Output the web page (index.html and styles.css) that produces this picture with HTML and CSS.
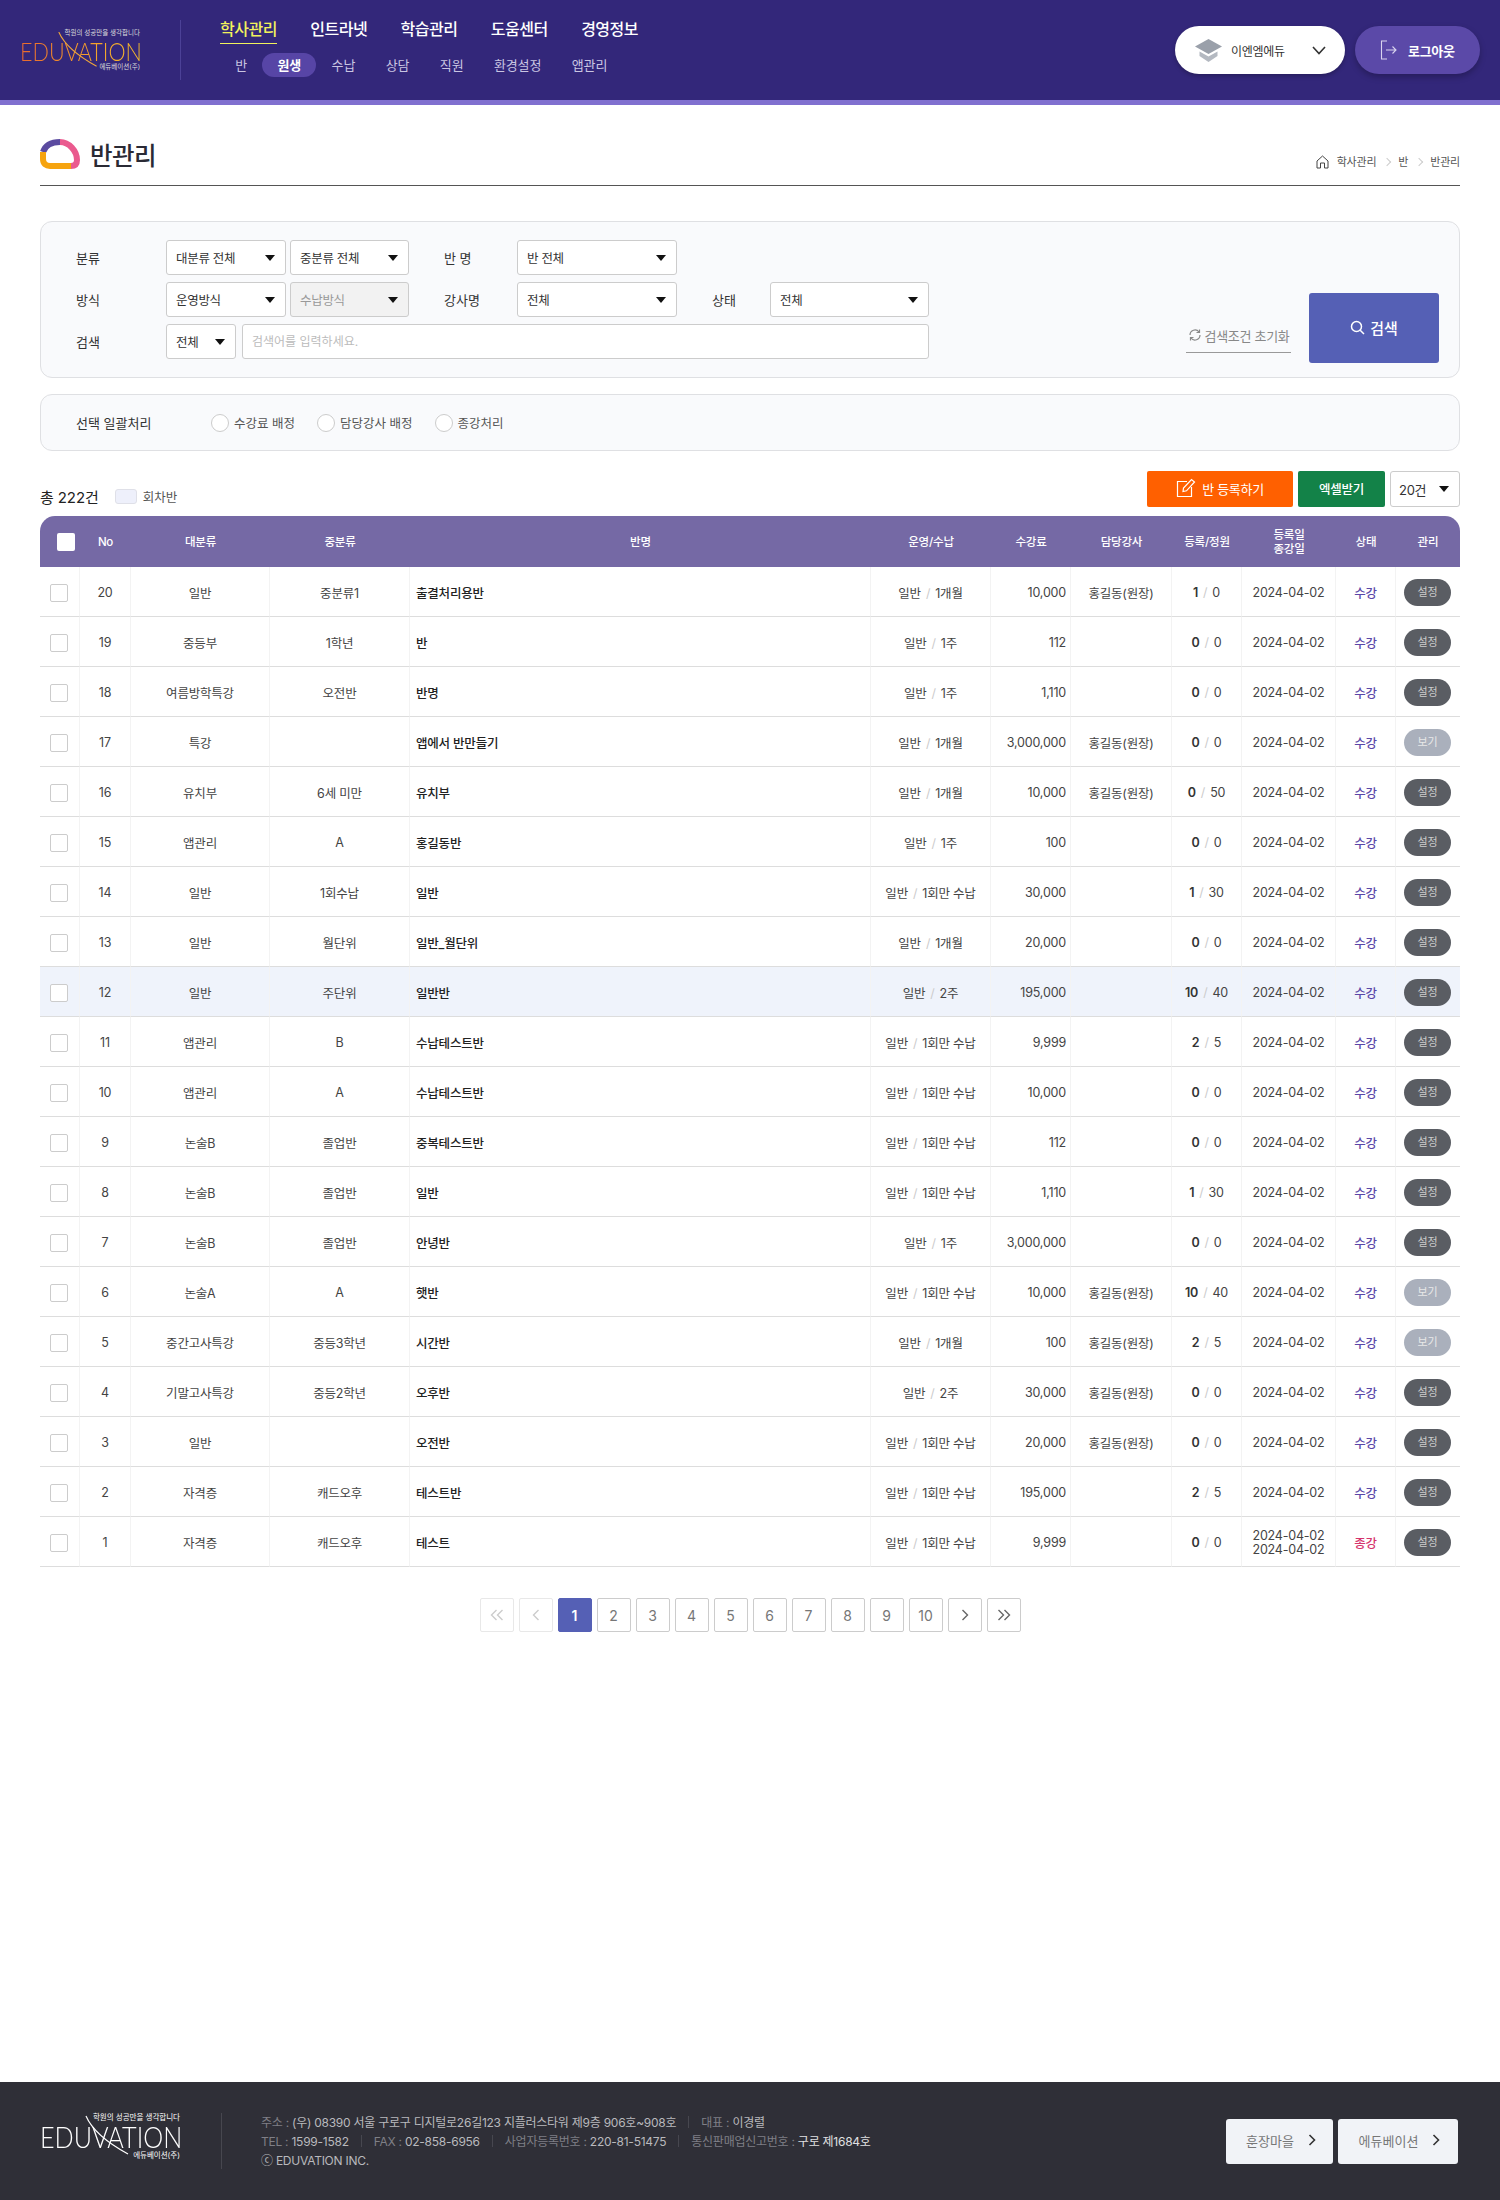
FILE: index.html
```html
<!DOCTYPE html>
<html lang="ko">
<head>
<meta charset="UTF-8">
<meta name="viewport" content="width=device-width, initial-scale=1.0">
<title>반관리</title>
<link rel="stylesheet" href="styles.css">
</head>
<body>
<header class="top">
  <a class="logo">
    <span class="logo-tag">학원의 성공만을 생각합니다</span>
    <span class="logo-name">EDUVATION</span>
    <span class="logo-sub">에듀베이션(주)</span>
    <svg class="logo-slash" viewBox="0 0 50 40"><path d="M2 0 C8 14 22 26 44 38" fill="none" stroke="#f0a63a" stroke-width="1.2"/></svg>
  </a>
  <nav class="nav">
    <div class="nav-main">
      <a class="on">학사관리</a>
      <a>인트라넷</a>
      <a>학습관리</a>
      <a>도움센터</a>
      <a>경영정보</a>
    </div>
    <div class="nav-sub">
      <a>반</a>
      <a class="on">원생</a>
      <a>수납</a>
      <a>상담</a>
      <a>직원</a>
      <a>환경설정</a>
      <a>앱관리</a>
    </div>
  </nav>
  <div class="top-right">
    <div class="academy">
      <svg width="27" height="23" viewBox="0 0 27 23"><path d="M13.5 0 L27 7.5 L13.5 15 L0 7.5 Z" fill="#9aa0aa"/><path d="M4.5 12.5 L13.5 17.5 L22.5 12.5 V17 L13.5 23 L4.5 17 Z" fill="#b4b9c1"/></svg>
      <span class="academy-name">이엔엠에듀</span>
      <svg width="14" height="9" viewBox="0 0 14 9"><path d="M1 1 L7 7.5 L13 1" fill="none" stroke="#333" stroke-width="1.6"/></svg>
    </div>
    <a class="logout">
      <svg width="17" height="20" viewBox="0 0 17 20" fill="none" stroke="#d9d4ee" stroke-width="1.1"><path d="M7 1 H1.5 V19 H7"/><path d="M6 10 H16 M12.5 6.5 L16 10 L12.5 13.5"/></svg>
      로그아웃
    </a>
  </div>
</header>

<main class="main">
  <div class="page-head">
    <h1 class="page-title">
      <svg width="40" height="30" viewBox="0 0 40 30" fill="none" stroke-width="6" stroke-linecap="butt">
        <path d="M3 13 C5 7 10 3 20 3" stroke="#5b4ba0"/>
        <path d="M20 3 C29 3 37 12 37 21 C37 25 35 27 31 27" stroke="#ea5a8e"/>
        <path d="M3 13 V20 C3 25 6 27 10 27 H31" stroke="#f6a40f"/>
      </svg>
      반관리
    </h1>
    <div class="crumb">
      <svg width="13" height="14" viewBox="0 0 13 14" fill="none" stroke="#444" stroke-width="1"><path d="M1 13 V6 L6.5 1 L12 6 V13 H8.5 V8 H4.5 V13 Z"/></svg>
      <span>학사관리</span>
      <i class="crumb-arrow"></i>
      <span>반</span>
      <i class="crumb-arrow"></i>
      <span>반관리</span>
    </div>
  </div>

  <section class="panel search">
    <div class="fields">
      <div class="field-row">
        <label class="lb">분류</label>
        <span class="sel w120">대분류 전체</span>
        <span class="sel w119 ml4">중분류 전체</span>
        <label class="lb lb-name">반 명</label>
        <span class="sel w160">반 전체</span>
      </div>
      <div class="field-row">
        <label class="lb">방식</label>
        <span class="sel w120">운영방식</span>
        <span class="sel w119 ml4 off">수납방식</span>
        <label class="lb lb-name">강사명</label>
        <span class="sel w160">전체</span>
        <label class="lb lb-state">상태</label>
        <span class="sel w159">전체</span>
      </div>
      <div class="field-row">
        <label class="lb">검색</label>
        <span class="sel w70">전체</span>
        <input class="keyword" type="text" placeholder="검색어를 입력하세요.">
      </div>
    </div>
    <div class="search-actions">
      <a class="reset">
        <svg width="14" height="14" viewBox="0 0 14 14" fill="none" stroke="#888" stroke-width="1.2"><path d="M2 7 A5 5 0 0 1 11 4 M12 7 A5 5 0 0 1 3 10"/><path d="M11.5 1.5 V4.5 H8.5 M2.5 12.5 V9.5 H5.5"/></svg>
        검색조건 초기화
      </a>
      <button class="search-btn" type="button">
        <svg width="15" height="15" viewBox="0 0 15 15" fill="none" stroke="#fff" stroke-width="1.5"><circle cx="6.5" cy="6.5" r="5"/><path d="M10.2 10.2 L14 14"/></svg>
        검색
      </button>
    </div>
  </section>

  <section class="panel batch">
    <label class="batch-title">선택 일괄처리</label>
    <div class="radios">
      <label><i class="radio"></i>수강료 배정</label>
      <label><i class="radio"></i>담당강사 배정</label>
      <label><i class="radio"></i>종강처리</label>
    </div>
  </section>

  <div class="toolbar">
    <div class="total">
      <span class="total-num">총 222건</span>
      <i class="swatch"></i>
      <span class="swatch-label">회차반</span>
    </div>
    <div class="tools">
      <a class="btn btn-orange">
        <svg width="20" height="20" viewBox="0 0 20 20" fill="none" stroke="#fff" stroke-width="1.2"><path d="M11 3.5 H1.5 V18.5 H15.5 V9"/><path d="M7 13.5 L7.5 10 L15.5 1.5 L18.5 4 L10.5 12.8 Z"/></svg>
        반 등록하기
      </a>
      <a class="btn btn-green">엑셀받기</a>
      <span class="sel w70 size">20건</span>
    </div>
  </div>

  <table class="list">
    <colgroup>
      <col class="c-check"><col class="c-no"><col class="c-big"><col class="c-mid"><col>
      <col class="c-type"><col class="c-fee"><col class="c-teacher"><col class="c-count">
      <col class="c-date"><col class="c-state"><col class="c-manage">
    </colgroup>
    <thead>
      <tr>
        <th><i class="check check-all"></i></th><th>No</th><th>대분류</th><th>중분류</th><th>반명</th>
        <th>운영/수납</th><th>수강료</th><th>담당강사</th><th>등록/정원</th><th>등록일<br>종강일</th><th>상태</th><th>관리</th>
      </tr>
    </thead>
    <tbody>
      <tr><td><i class="check"></i></td><td>20</td><td>일반</td><td>중분류1</td><td class="name">출결처리용반</td><td>일반<em>/</em>1개월</td><td class="fee">10,000</td><td>홍길동(원장)</td><td><b>1</b><em>/</em>0</td><td>2024-04-02</td><td class="ing">수강</td><td><a class="mg">설정</a></td></tr>
      <tr><td><i class="check"></i></td><td>19</td><td>중등부</td><td>1학년</td><td class="name">반</td><td>일반<em>/</em>1주</td><td class="fee">112</td><td></td><td><b>0</b><em>/</em>0</td><td>2024-04-02</td><td class="ing">수강</td><td><a class="mg">설정</a></td></tr>
      <tr><td><i class="check"></i></td><td>18</td><td>여름방학특강</td><td>오전반</td><td class="name">반명</td><td>일반<em>/</em>1주</td><td class="fee">1,110</td><td></td><td><b>0</b><em>/</em>0</td><td>2024-04-02</td><td class="ing">수강</td><td><a class="mg">설정</a></td></tr>
      <tr><td><i class="check"></i></td><td>17</td><td>특강</td><td></td><td class="name">앱에서 반만들기</td><td>일반<em>/</em>1개월</td><td class="fee">3,000,000</td><td>홍길동(원장)</td><td><b>0</b><em>/</em>0</td><td>2024-04-02</td><td class="ing">수강</td><td><a class="mg mg-view">보기</a></td></tr>
      <tr><td><i class="check"></i></td><td>16</td><td>유치부</td><td>6세 미만</td><td class="name">유치부</td><td>일반<em>/</em>1개월</td><td class="fee">10,000</td><td>홍길동(원장)</td><td><b>0</b><em>/</em>50</td><td>2024-04-02</td><td class="ing">수강</td><td><a class="mg">설정</a></td></tr>
      <tr><td><i class="check"></i></td><td>15</td><td>앱관리</td><td>A</td><td class="name">홍길동반</td><td>일반<em>/</em>1주</td><td class="fee">100</td><td></td><td><b>0</b><em>/</em>0</td><td>2024-04-02</td><td class="ing">수강</td><td><a class="mg">설정</a></td></tr>
      <tr><td><i class="check"></i></td><td>14</td><td>일반</td><td>1회수납</td><td class="name">일반</td><td>일반<em>/</em>1회만 수납</td><td class="fee">30,000</td><td></td><td><b>1</b><em>/</em>30</td><td>2024-04-02</td><td class="ing">수강</td><td><a class="mg">설정</a></td></tr>
      <tr><td><i class="check"></i></td><td>13</td><td>일반</td><td>월단위</td><td class="name">일반_월단위</td><td>일반<em>/</em>1개월</td><td class="fee">20,000</td><td></td><td><b>0</b><em>/</em>0</td><td>2024-04-02</td><td class="ing">수강</td><td><a class="mg">설정</a></td></tr>
      <tr class="hl"><td><i class="check"></i></td><td>12</td><td>일반</td><td>주단위</td><td class="name">일반반</td><td>일반<em>/</em>2주</td><td class="fee">195,000</td><td></td><td><b>10</b><em>/</em>40</td><td>2024-04-02</td><td class="ing">수강</td><td><a class="mg">설정</a></td></tr>
      <tr><td><i class="check"></i></td><td>11</td><td>앱관리</td><td>B</td><td class="name">수납테스트반</td><td>일반<em>/</em>1회만 수납</td><td class="fee">9,999</td><td></td><td><b>2</b><em>/</em>5</td><td>2024-04-02</td><td class="ing">수강</td><td><a class="mg">설정</a></td></tr>
      <tr><td><i class="check"></i></td><td>10</td><td>앱관리</td><td>A</td><td class="name">수납테스트반</td><td>일반<em>/</em>1회만 수납</td><td class="fee">10,000</td><td></td><td><b>0</b><em>/</em>0</td><td>2024-04-02</td><td class="ing">수강</td><td><a class="mg">설정</a></td></tr>
      <tr><td><i class="check"></i></td><td>9</td><td>논술B</td><td>졸업반</td><td class="name">중복테스트반</td><td>일반<em>/</em>1회만 수납</td><td class="fee">112</td><td></td><td><b>0</b><em>/</em>0</td><td>2024-04-02</td><td class="ing">수강</td><td><a class="mg">설정</a></td></tr>
      <tr><td><i class="check"></i></td><td>8</td><td>논술B</td><td>졸업반</td><td class="name">일반</td><td>일반<em>/</em>1회만 수납</td><td class="fee">1,110</td><td></td><td><b>1</b><em>/</em>30</td><td>2024-04-02</td><td class="ing">수강</td><td><a class="mg">설정</a></td></tr>
      <tr><td><i class="check"></i></td><td>7</td><td>논술B</td><td>졸업반</td><td class="name">안녕반</td><td>일반<em>/</em>1주</td><td class="fee">3,000,000</td><td></td><td><b>0</b><em>/</em>0</td><td>2024-04-02</td><td class="ing">수강</td><td><a class="mg">설정</a></td></tr>
      <tr><td><i class="check"></i></td><td>6</td><td>논술A</td><td>A</td><td class="name">햇반</td><td>일반<em>/</em>1회만 수납</td><td class="fee">10,000</td><td>홍길동(원장)</td><td><b>10</b><em>/</em>40</td><td>2024-04-02</td><td class="ing">수강</td><td><a class="mg mg-view">보기</a></td></tr>
      <tr><td><i class="check"></i></td><td>5</td><td>중간고사특강</td><td>중등3학년</td><td class="name">시간반</td><td>일반<em>/</em>1개월</td><td class="fee">100</td><td>홍길동(원장)</td><td><b>2</b><em>/</em>5</td><td>2024-04-02</td><td class="ing">수강</td><td><a class="mg mg-view">보기</a></td></tr>
      <tr><td><i class="check"></i></td><td>4</td><td>기말고사특강</td><td>중등2학년</td><td class="name">오후반</td><td>일반<em>/</em>2주</td><td class="fee">30,000</td><td>홍길동(원장)</td><td><b>0</b><em>/</em>0</td><td>2024-04-02</td><td class="ing">수강</td><td><a class="mg">설정</a></td></tr>
      <tr><td><i class="check"></i></td><td>3</td><td>일반</td><td></td><td class="name">오전반</td><td>일반<em>/</em>1회만 수납</td><td class="fee">20,000</td><td>홍길동(원장)</td><td><b>0</b><em>/</em>0</td><td>2024-04-02</td><td class="ing">수강</td><td><a class="mg">설정</a></td></tr>
      <tr><td><i class="check"></i></td><td>2</td><td>자격증</td><td>캐드오후</td><td class="name">테스트반</td><td>일반<em>/</em>1회만 수납</td><td class="fee">195,000</td><td></td><td><b>2</b><em>/</em>5</td><td>2024-04-02</td><td class="ing">수강</td><td><a class="mg">설정</a></td></tr>
      <tr><td><i class="check"></i></td><td>1</td><td>자격증</td><td>캐드오후</td><td class="name">테스트</td><td>일반<em>/</em>1회만 수납</td><td class="fee">9,999</td><td></td><td><b>0</b><em>/</em>0</td><td class="two">2024-04-02<br>2024-04-02</td><td class="end">종강</td><td><a class="mg">설정</a></td></tr>
    </tbody>
  </table>

  <div class="paging">
    <a class="dim"><svg width="14" height="12" viewBox="0 0 14 12" fill="none" stroke="#ccc" stroke-width="1.4"><path d="M6.5 1 L1.5 6 L6.5 11 M12.5 1 L7.5 6 L12.5 11"/></svg></a>
    <a class="dim"><svg width="8" height="12" viewBox="0 0 8 12" fill="none" stroke="#ccc" stroke-width="1.4"><path d="M6.5 1 L1.5 6 L6.5 11"/></svg></a>
    <a class="cur">1</a>
    <a>2</a><a>3</a><a>4</a><a>5</a><a>6</a><a>7</a><a>8</a><a>9</a><a>10</a>
    <a><svg width="8" height="12" viewBox="0 0 8 12" fill="none" stroke="#666" stroke-width="1.4"><path d="M1.5 1 L6.5 6 L1.5 11"/></svg></a>
    <a><svg width="14" height="12" viewBox="0 0 14 12" fill="none" stroke="#666" stroke-width="1.4"><path d="M1.5 1 L6.5 6 L1.5 11 M7.5 1 L12.5 6 L7.5 11"/></svg></a>
  </div>
</main>

<footer class="foot">
  <a class="logo logo-white">
    <span class="logo-tag">학원의 성공만을 생각합니다</span>
    <span class="logo-name">EDUVATION</span>
    <span class="logo-sub">에듀베이션(주)</span>
    <svg class="logo-slash" viewBox="0 0 50 40"><path d="M2 0 C8 14 22 26 44 38" fill="none" stroke="#fff" stroke-width="1.2"/></svg>
  </a>
  <div class="foot-info">
    <p>주소 : <span>(우) 08390 서울 구로구 디지털로26길123 지플러스타워 제9층 906호~908호</span><i></i>대표 : <span>이경렬</span></p>
    <p>TEL : <span>1599-1582</span><i></i>FAX : <span>02-858-6956</span><i></i>사업자등록번호 : <span>220-81-51475</span><i></i>통신판매업신고번호 : <span class="bright">구로 제1684호</span></p>
    <p><span>ⓒ EDUVATION INC.</span></p>
  </div>
  <div class="foot-links">
    <a class="w107">훈장마을<svg width="8" height="12" viewBox="0 0 8 12" fill="none" stroke="#333" stroke-width="1.6"><path d="M1.5 1 L6.5 6 L1.5 11"/></svg></a>
    <a class="w120">에듀베이션<svg width="8" height="12" viewBox="0 0 8 12" fill="none" stroke="#333" stroke-width="1.6"><path d="M1.5 1 L6.5 6 L1.5 11"/></svg></a>
  </div>
</footer>
</body>
</html>
```
FILE: styles.css
```css
* {
margin: 0;
padding: 0;
box-sizing: border-box;
}
body {
min-height: 2200px;
display: flex;
flex-direction: column;
font-family: Inter, "Noto Sans CJK KR", sans-serif;
font-size: 12px;
color: #444;
background: #fff;
}
a {
text-decoration: none;
color: inherit;
}
i, em {
font-style: normal;
}

/* header */
.top {
height: 105px;
flex: none;
display: flex;
align-items: flex-start;
background: #33277a;
border-bottom: 5px solid #8070cf;
}
.logo {
position: relative;
display: flex;
flex-direction: column;
align-items: flex-end;
width: 120px;
margin: 28px 0 0 20px;
height: 44px;
}
.logo-tag {
font-size: 6.5px;
line-height: 10px;
color: #ddd;
white-space: nowrap;
}
.logo-name {
align-self: flex-start;
flex: none;
width: 165px;
margin-top: 3px;
font-family: Lato, sans-serif;
font-size: 26px;
font-weight: 300;
line-height: 21px;
white-space: nowrap;
color: transparent;
background: linear-gradient(90deg, #e8692e, #f39a2c 45%, #f6c52c);
-webkit-background-clip: text;
background-clip: text;
transform: scaleX(0.83);
transform-origin: left center;
}
.logo-sub {
font-size: 6.5px;
line-height: 11px;
color: #ddd;
white-space: nowrap;
}
.logo-slash {
position: absolute;
left: 37px;
top: 4px;
width: 45px;
height: 36px;
}
.nav {
margin-left: 40px;
padding-left: 39px;
margin-top: 20px;
height: 60px;
border-left: 1px solid #4c4197;
}
.nav-main {
display: flex;
gap: 33.4px;
margin-top: -5px;
}
.nav-main a {
height: 29px;
font-size: 16px;
font-weight: 500;
line-height: 28px;
letter-spacing: -0.5px;
color: #fff;
}
.nav-main .on {
color: #f2f25c;
border-bottom: 1px solid #f2f25c;
}
.nav-sub {
display: flex;
margin-top: 9px;
}
.nav-sub a {
height: 24px;
padding: 0 15.2px;
font-size: 13px;
line-height: 24px;
letter-spacing: -0.1px;
color: #c9c5e2;
border-radius: 12px;
}
.nav-sub .on {
background: #5745a6;
color: #fff;
font-weight: 700;
}
.top-right {
margin-left: auto;
margin-right: 20px;
margin-top: 26px;
display: flex;
gap: 10px;
}
.academy {
width: 170px;
height: 48px;
display: flex;
align-items: center;
padding: 0 19px 0 20px;
background: #fff;
border-radius: 24px;
box-shadow: 0 2px 4px rgba(0, 0, 0, 0.25);
}
.academy-name {
flex: 1;
margin-left: 9px;
font-size: 12px;
letter-spacing: -0.3px;
color: #333;
}
.logout {
width: 125px;
height: 48px;
display: flex;
align-items: center;
gap: 11px;
padding-left: 25px;
background: #5b49a8;
border-radius: 24px;
font-size: 13px;
font-weight: 700;
color: #fff;
letter-spacing: -0.3px;
box-shadow: 0 3px 6px rgba(0, 0, 0, 0.25);
}

/* page title */
.main {
flex: 1;
padding: 28px 40px 0;
}
.page-head {
height: 53px;
display: flex;
justify-content: space-between;
align-items: flex-end;
padding-bottom: 15px;
border-bottom: 1px solid #555;
}
.page-title {
display: flex;
align-items: center;
gap: 10px;
height: 32px;
font-size: 24.5px;
font-weight: 500;
letter-spacing: -0.5px;
color: #2a2a35;
}
.crumb {
display: flex;
align-items: center;
gap: 8px;
margin-bottom: 1px;
font-size: 11px;
line-height: 14px;
color: #555;
letter-spacing: -0.2px;
}
.crumb-arrow {
width: 6px;
height: 6px;
border-top: 1px solid #ccc;
border-right: 1px solid #ccc;
transform: rotate(45deg);
}

/* search panels */
.panel {
background: #f9fafc;
border: 1px solid #dfe0e3;
border-radius: 12px;
}
.search {
height: 157px;
margin-top: 35px;
display: flex;
padding: 18px 20px 14px 35px;
}
.fields {
display: flex;
flex-direction: column;
gap: 7px;
width: 854px;
flex: none;
}
.field-row {
display: flex;
align-items: center;
height: 35px;
}
.lb {
flex: none;
width: 90px;
font-size: 13px;
color: #333;
}
.lb-name {
width: 73px;
margin-left: 35px;
}
.lb-state {
width: 58px;
margin-left: 35px;
}
.sel {
flex: none;
height: 35px;
display: flex;
align-items: center;
justify-content: space-between;
padding: 0 10px 0 9px;
background: #fff;
border: 1px solid #ccc;
border-radius: 3px;
font-size: 12.5px;
color: #333;
letter-spacing: -0.3px;
}
.sel::after {
content: "";
border-top: 6px solid #111;
border-left: 5px solid transparent;
border-right: 5px solid transparent;
}
.sel.off {
background: #f2f2f2;
color: #999;
}
.w70 {
width: 70px;
}
.w119 {
width: 119px;
}
.w120 {
width: 120px;
}
.w159 {
width: 159px;
}
.w160 {
width: 160px;
}
.ml4 {
margin-left: 4px;
}
.keyword {
flex: none;
width: 687px;
height: 35px;
margin-left: 6px;
padding: 0 9px;
background: #fff;
border: 1px solid #ccc;
border-radius: 3px;
font-family: inherit;
font-size: 12px;
}
.keyword::placeholder {
color: #bbb;
}
.search-actions {
margin-left: auto;
align-self: flex-end;
display: flex;
align-items: flex-end;
gap: 18px;
}
.reset {
display: flex;
align-items: center;
justify-content: center;
gap: 3px;
width: 105px;
height: 28px;
margin-bottom: 10px;
padding-bottom: 7px;
border-bottom: 1px solid #999;
font-size: 13px;
color: #888;
letter-spacing: -0.3px;
white-space: nowrap;
}
.search-btn {
width: 130px;
height: 70px;
display: flex;
align-items: center;
justify-content: center;
gap: 5px;
padding-bottom: 2px;
border: none;
border-radius: 3px;
background: #5560b5;
color: #fff;
font-family: inherit;
font-size: 15px;
font-weight: 500;
}
.batch {
height: 57px;
margin-top: 16px;
display: flex;
align-items: center;
padding-left: 35px;
}
.batch-title {
width: 135px;
font-size: 13px;
color: #333;
}
.radios {
display: flex;
gap: 22px;
font-size: 12.5px;
color: #555;
}
.radios label {
display: flex;
align-items: center;
gap: 5px;
}
.radio {
width: 18px;
height: 18px;
background: #fff;
border: 1px solid #ccc;
border-radius: 50%;
}

/* list toolbar */
.toolbar {
height: 36px;
margin-top: 20px;
display: flex;
justify-content: space-between;
align-items: stretch;
}
.total {
display: flex;
align-items: center;
padding-top: 15px;
}
.total-num {
font-size: 15px;
letter-spacing: -0.1px;
color: #222;
}
.swatch {
width: 22px;
height: 15px;
margin-left: 16px;
background: #eef0fb;
border: 1px solid #dfe0e8;
border-radius: 3px;
}
.swatch-label {
margin-left: 6px;
font-size: 12.5px;
color: #555;
}
.tools {
display: flex;
gap: 5px;
}
.btn {
display: flex;
align-items: center;
justify-content: center;
height: 36px;
padding-bottom: 2px;
border-radius: 2px;
color: #fff;
font-size: 13px;
letter-spacing: -0.3px;
}
.btn-orange {
width: 146px;
gap: 6px;
background: #ff6000;
}
.btn-green {
width: 87px;
font-size: 12.5px;
font-weight: 500;
background: #138248;
}
.size {
height: 36px;
padding-left: 8px;
font-size: 13px;
}

/* table */
.list {
width: 100%;
margin-top: 9px;
border-collapse: separate;
border-spacing: 0;
table-layout: fixed;
}
.c-check {
width: 40px;
}
.c-no {
width: 51px;
}
.c-big {
width: 139px;
}
.c-mid {
width: 140px;
}
.c-type {
width: 120px;
}
.c-fee {
width: 80px;
}
.c-teacher {
width: 101px;
}
.c-count {
width: 70px;
}
.c-date {
width: 94px;
}
.c-state {
width: 60px;
}
.c-manage {
width: 64px;
}
.list th {
height: 51px;
background: #7569a5;
color: #fff;
font-size: 11.5px;
font-weight: 500;
line-height: 14px;
letter-spacing: -0.2px;
}
.list th:first-child {
border-top-left-radius: 15px;
}
.list th:last-child {
border-top-right-radius: 15px;
}
.list td {
height: 50px;
padding-top: 2px;
text-align: center;
font-size: 12.5px;
letter-spacing: -0.2px;
color: #444;
border-bottom: 1px solid #ddd;
border-right: 1px solid #f3f3f3;
}
.list td:last-child {
border-right: none;
}
.list .hl td {
background: #eff3fb;
}
.list td.name {
padding-left: 6px;
text-align: left;
font-weight: 500;
color: #222;
}
.list td.fee {
padding-right: 4px;
text-align: right;
}
.list em {
margin: 0 5px;
color: #ccc;
}
.list b {
font-weight: 600;
color: #333;
}
.list td.ing {
color: #5a47a8;
font-weight: 500;
}
.list td.end {
color: #d6336c;
font-weight: 500;
}
.list td.two {
line-height: 14px;
}
.check {
display: block;
width: 18px;
height: 18px;
margin-left: 10px;
background: #fff;
border: 1px solid #ccc;
border-radius: 2px;
}
.check-all {
margin-left: 17px;
border: none;
}
.mg {
display: block;
width: 47px;
height: 27px;
margin-left: 8px;
background: #5a5d63;
border-radius: 14px;
font-size: 11px;
line-height: 27px;
color: #ccc;
}
.mg-view {
background: #aab0bc;
color: #e8e8e8;
}

/* paging */
.paging {
display: flex;
justify-content: center;
gap: 5px;
margin-top: 31px;
}
.paging a {
width: 34px;
height: 34px;
display: flex;
align-items: center;
justify-content: center;
background: #fff;
border: 1px solid #ccc;
border-radius: 2px;
font-size: 14px;
color: #777;
}
.paging .dim {
border-color: #e8e8e8;
}
.paging .cur {
background: #5560b5;
border-color: #5560b5;
color: #fff;
font-weight: 600;
}

/* footer */
.foot {
height: 118px;
flex: none;
display: flex;
align-items: center;
padding: 0 42px 0 40px;
background: #2f2f37;
}
.logo-white {
width: 140px;
height: 56px;
margin: 0;
flex: none;
}
.logo-white .logo-tag {
font-size: 7.5px;
color: #fff;
}
.logo-white .logo-name {
width: 189px;
margin-top: 0;
font-size: 30px;
line-height: 26px;
color: #fff;
background: none;
transform: scaleX(0.84);
}
.logo-white .logo-sub {
font-size: 7.5px;
line-height: 13px;
color: #fff;
}
.logo-white .logo-slash {
left: 44px;
top: 2px;
width: 50px;
height: 42px;
}
.foot-info {
height: 56px;
margin-left: 41px;
padding-left: 39px;
border-left: 1px solid #47474f;
font-size: 12px;
line-height: 19px;
color: #7f7f86;
letter-spacing: -0.25px;
}
.foot-info span {
color: #b9b9bd;
}
.foot-info .bright {
color: #e0e0e2;
}
.foot-info i {
display: inline-block;
width: 1px;
height: 12px;
margin: 0 12px;
background: #47474f;
vertical-align: -1px;
}
.foot-links {
margin-left: auto;
display: flex;
gap: 5px;
}
.foot-links a {
height: 45px;
display: flex;
align-items: center;
justify-content: center;
gap: 14px;
padding: 0 0 2px 3px;
background: #f1f3f7;
border-radius: 3px;
font-size: 13px;
color: #777;
}
.w107 {
width: 107px;
}
```
